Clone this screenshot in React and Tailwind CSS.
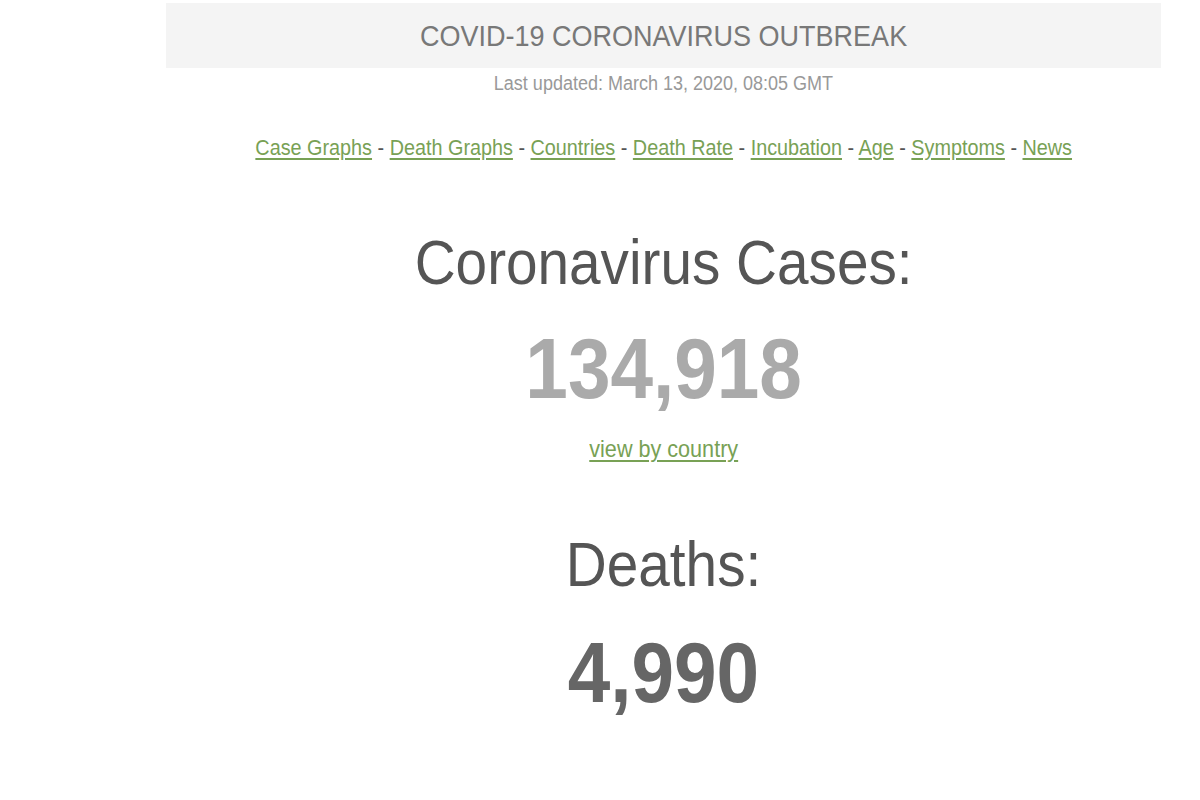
import React from "react";

const links = ["Case Graphs", "Death Graphs", "Countries", "Death Rate", "Incubation", "Age", "Symptoms", "News"];

// the page text is Arial-like but squeezed horizontally
function Line({ className, children }) {
  return (
    <div className={className}>
      <span className="inline-block scale-x-[0.9] whitespace-nowrap">{children}</span>
    </div>
  );
}

export default function App() {
  return (
    <div className="min-h-[800px] bg-white" style={{ fontFamily: "'Liberation Sans', Arial, sans-serif" }}>
      <div className="ml-[166px] w-[995px] pt-[3px] text-center">
        <div className="bg-[#f4f4f4] h-[65px] flex items-center justify-center">
          <span className="inline-block scale-x-[0.9] text-[30px] leading-none text-[#787878]">COVID-19 CORONAVIRUS OUTBREAK</span>
        </div>
        <Line className="mt-[5px] text-[20px] leading-none text-[#999]">Last updated: March 13, 2020, 08:05 GMT</Line>

        <Line className="mt-[44px] text-[22px] leading-none text-[#555]">
          {links.map((l, i) => (
            <span key={l}>
              <a href="#" className="text-[#78a155] underline underline-offset-[3px]">{l}</a>
              {i < links.length - 1 && " - "}
            </span>
          ))}
        </Line>

        <Line className="mt-[72px] text-[63px] leading-none text-[#555]">Coronavirus Cases:</Line>
        <Line className="mt-[32px] text-[85px] leading-none font-bold text-[#aaa]">134,918</Line>
        <Line className="mt-[26px] text-[24px] leading-none">
          <a href="#" className="text-[#78a155] underline underline-offset-[3px]">view by country</a>
        </Line>

        <Line className="mt-[72px] text-[63px] leading-none text-[#555]">Deaths:</Line>
        <Line className="mt-[34px] text-[85px] leading-none font-bold text-[#666]">4,990</Line>
      </div>
    </div>
  );
}
